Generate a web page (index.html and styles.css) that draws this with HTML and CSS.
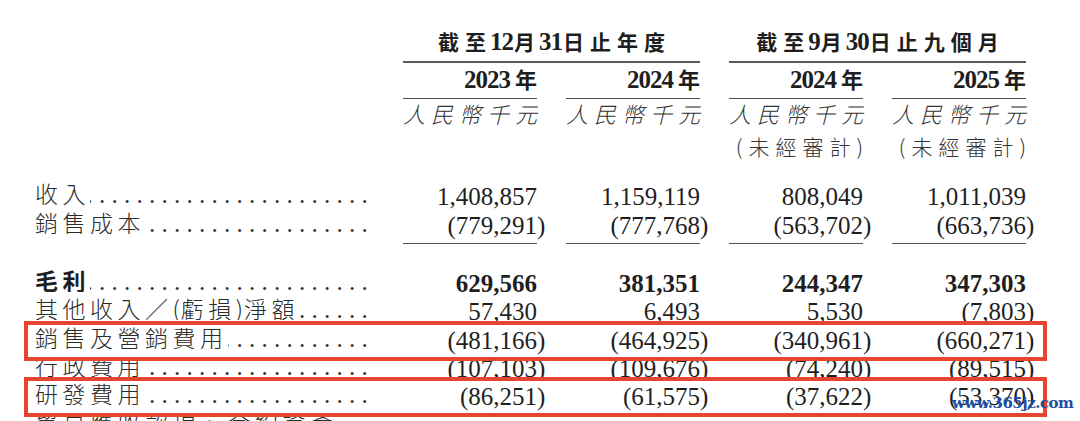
FILE: index.html
```html
<!DOCTYPE html>
<html lang="zh-Hant">
<head>
<meta charset="utf-8">
<title>財務資料</title>
<link rel="stylesheet" href="styles.css">
</head>
<body>
<div class="sheet">
  <div class="row hg">
    <div class="lab"></div>
    <div class="grp"><span class="t">截至<span class="d">12</span>月<span class="d">31</span>日止年度</span></div>
    <div class="grp"><span class="t">截至<span class="d">9</span>月<span class="d">30</span>日止九個月</span></div>
  </div>
  <div class="row hy">
    <div class="lab"></div>
    <div class="yr"><span class="d">2023</span>年</div>
    <div class="yr"><span class="d">2024</span>年</div>
    <div class="yr"><span class="d">2024</span>年</div>
    <div class="yr"><span class="d">2025</span>年</div>
  </div>
  <div class="row hu">
    <div class="lab"></div>
    <div class="unit"><span>人民幣千元</span></div>
    <div class="unit"><span>人民幣千元</span></div>
    <div class="unit"><span>人民幣千元</span></div>
    <div class="unit"><span>人民幣千元</span></div>
  </div>
  <div class="row ha">
    <div class="lab"></div>
    <div></div>
    <div></div>
    <div class="audit"><span>(未經審計)</span></div>
    <div class="audit"><span>(未經審計)</span></div>
  </div>

  <div class="row r first">
    <div class="lab"><span class="txt">收入</span><span class="lead">........................................</span></div>
    <div class="n">1,408,857</div>
    <div class="n">1,159,119</div>
    <div class="n">808,049</div>
    <div class="n">1,011,039</div>
  </div>
  <div class="row r ul">
    <div class="lab"><span class="txt">銷售成本</span><span class="lead">........................................</span></div>
    <div class="n">(779,291<span class="rp">)</span></div>
    <div class="n">(777,768<span class="rp">)</span></div>
    <div class="n">(563,702<span class="rp">)</span></div>
    <div class="n">(663,736<span class="rp">)</span></div>
  </div>
  <div class="row r b gap">
    <div class="lab"><span class="txt">毛利</span><span class="lead">........................................</span></div>
    <div class="n">629,566</div>
    <div class="n">381,351</div>
    <div class="n">244,347</div>
    <div class="n">347,303</div>
  </div>
  <div class="row r">
    <div class="lab"><span class="txt">其他收入／<span class="p">(</span>虧損<span class="p">)</span>淨額</span><span class="lead">........................................</span></div>
    <div class="n">57,430</div>
    <div class="n">6,493</div>
    <div class="n">5,530</div>
    <div class="n">(7,803<span class="rp">)</span></div>
  </div>
  <div class="row r box">
    <div class="lab"><span class="txt">銷售及營銷費用</span><span class="lead">........................................</span></div>
    <div class="n">(481,166<span class="rp">)</span></div>
    <div class="n">(464,925<span class="rp">)</span></div>
    <div class="n">(340,961<span class="rp">)</span></div>
    <div class="n">(660,271<span class="rp">)</span></div>
  </div>
  <div class="row r">
    <div class="lab"><span class="txt">行政費用</span><span class="lead">........................................</span></div>
    <div class="n">(107,103<span class="rp">)</span></div>
    <div class="n">(109,676<span class="rp">)</span></div>
    <div class="n">(74,240<span class="rp">)</span></div>
    <div class="n">(89,515<span class="rp">)</span></div>
  </div>
  <div class="row r box">
    <div class="lab"><span class="txt">研發費用</span><span class="lead">........................................</span></div>
    <div class="n">(86,251<span class="rp">)</span></div>
    <div class="n">(61,575<span class="rp">)</span></div>
    <div class="n">(37,622<span class="rp">)</span></div>
    <div class="n">(53,370<span class="rp">)</span></div>
  </div>
  <div class="row r">
    <div class="lab"><span class="txt">貿易應收款項、合約資產</span><span class="lead">........................................</span></div>
    <div class="n"></div>
    <div class="n"></div>
    <div class="n"></div>
    <div class="n"></div>
  </div>

  <div class="wm">www.365jz.com</div>
</div>
</body>
</html>
```

FILE: styles.css
```css
html, body {
  margin: 0;
  height: 100%;
  overflow: hidden;
  background: #ffffff;
}

.sheet {
  position: relative;
  width: 991px;
  padding: 26px 54px 0 35px;
  font-family: "Liberation Serif", "Noto Sans CJK TC", serif;
  color: #222222;
}

.row {
  display: grid;
  grid-template-columns: 339px repeat(4, 134px);
  column-gap: 29px;
  align-items: start;
}

/* ---------- header ---------- */
.grp {
  grid-column: span 2;
  text-align: center;
  white-space: nowrap;
  font-family: "Noto Sans CJK TC", sans-serif;
  font-weight: 700;
  font-size: 21px;
  line-height: 30px;
  letter-spacing: 6px;
  padding-bottom: 4px;
  border-bottom: 2.5px solid #5a5a5a;
  color: #1e1e1e;
}
.grp .t { margin-right: -6px; }

.d {
  font-family: "Liberation Serif", serif;
  font-weight: 700;
  font-size: 25px;
  letter-spacing: -1px;
  margin: 0 1px 0 -2px;
}

.yr {
  text-align: right;
  white-space: nowrap;
  font-family: "Noto Sans CJK TC", sans-serif;
  font-weight: 700;
  font-size: 22px;
  line-height: 28px;
  padding: 1px 0 4px;
  border-bottom: 1.5px solid #4a4a4a;
  color: #1e1e1e;
}
.yr .d { margin: 0 5px 0 0; }

.unit {
  text-align: right;
  white-space: nowrap;
  font-family: "Noto Sans CJK TC", sans-serif;
  font-weight: 300;
  font-style: italic;
  font-size: 22px;
  line-height: 28px;
  letter-spacing: 6px;
  color: #333333;
}
.unit span { margin-right: -6px; }

.audit {
  text-align: right;
  white-space: nowrap;
  font-family: "Noto Sans CJK TC", sans-serif;
  font-weight: 300;
  font-size: 21px;
  line-height: 28px;
  letter-spacing: 6px;
  padding-top: 5px;
  color: #333333;
}
.audit span { margin-right: -6px; }

/* ---------- body rows ---------- */
.lab {
  display: flex;
  align-items: baseline;
  min-width: 0;
  overflow: hidden;
  font-family: "Noto Sans CJK TC", sans-serif;
  font-weight: 300;
  font-size: 23px;
  line-height: 20px;
  letter-spacing: 4.5px;
  color: #2b2b2b;
}
.lab .txt { white-space: nowrap; flex: none; }
.lab .p { letter-spacing: 1px; }
.lab .lead {
  flex: 1;
  min-width: 0;
  overflow: hidden;
  white-space: nowrap;
  direction: rtl;
  font-family: "Liberation Serif", serif;
  font-weight: 400;
  font-size: 25px;
  letter-spacing: 6.25px;
  color: #333333;
}

.n {
  text-align: right;
  font-family: "Liberation Serif", serif;
  font-size: 25px;
  line-height: 28.3px;
  white-space: nowrap;
  color: #1f1f1f;
}
.rp { margin-right: -8.3px; }

.first { margin-top: 23.4px; }
.gap { margin-top: 26px; }

.ul .n {
  padding-bottom: 3px;
  border-bottom: 1.5px solid #555555;
}

.b .n { font-weight: 700; }
.b .lab .txt { font-weight: 700; color: #1e1e1e; }

.box {
  position: relative;
  z-index: 1;
  background: #ffffff;
  border: 4px solid #e64530;
  margin: -6px -21px -6px -11px;
  padding: 2px 17px 2px 7px;
}

.wm {
  position: absolute;
  left: 952px;
  top: 394px;
  z-index: 2;
  font-family: "DejaVu Serif", serif;
  font-weight: 700;
  font-size: 15px;
  letter-spacing: -0.5px;
  color: #1f4fa0;
}
```
